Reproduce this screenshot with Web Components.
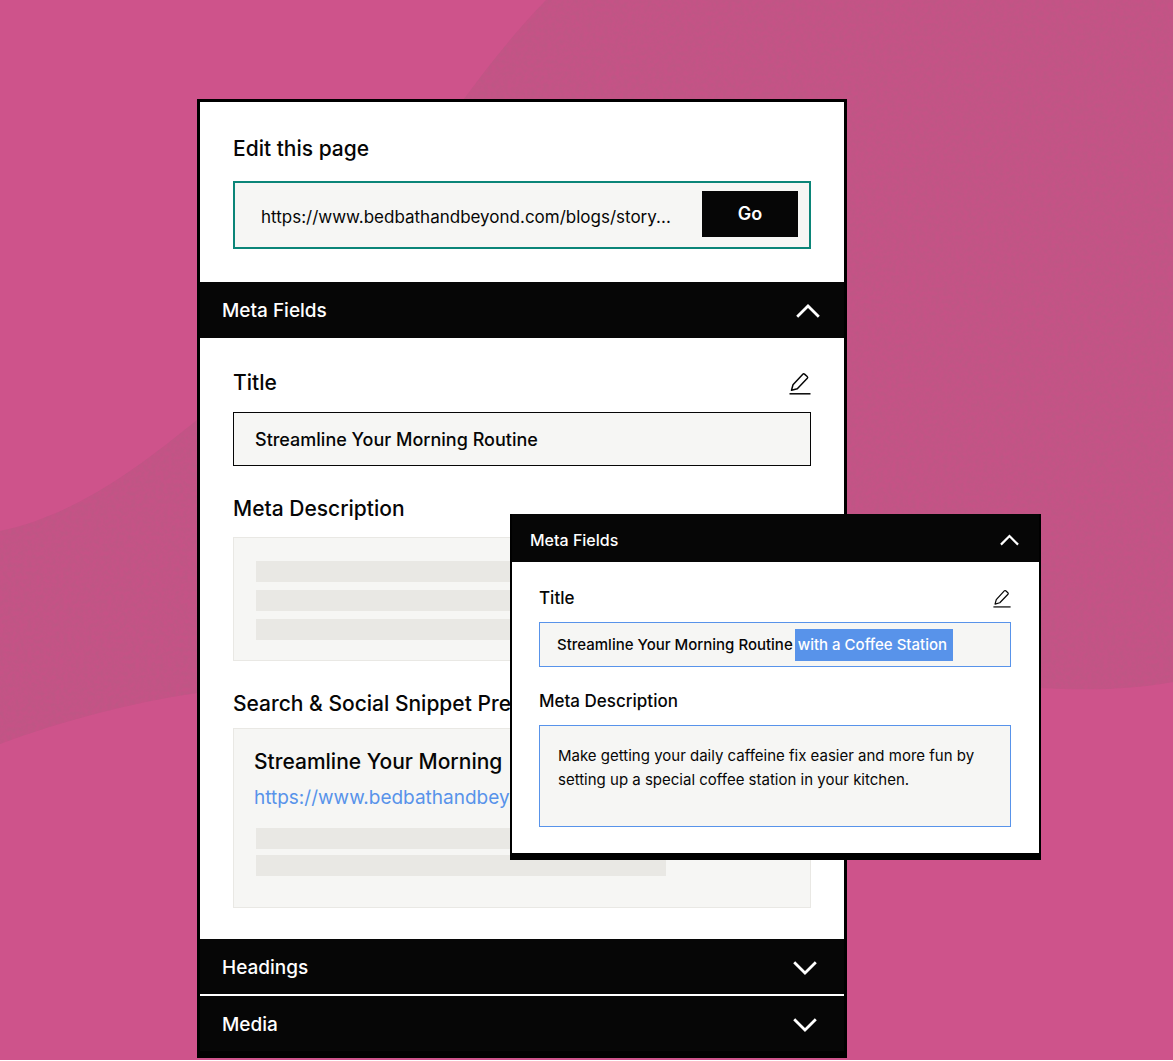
<!DOCTYPE html>
<html lang="en">
<head>
  <meta charset="UTF-8">
  <meta name="viewport" content="width=device-width, initial-scale=1.0">
  <title>Edit this page</title>
  <style>
    body {
      margin: 0;
      background: #ffffff;
      color: #060606;
      font-family: Inter, "Liberation Sans", sans-serif;
    }
  </style>
</head>
<body>
  <editor-stage>
    <editor-panel slot="main">
      <url-form label="Edit this page" value="https://www.bedbathandbeyond.com/blogs/story..." action="Go"></url-form>
      <section-header label="Meta Fields" open></section-header>
      <section-body>
        <text-field label="Title" value="Streamline Your Morning Routine"></text-field>
        <preview-card label="Meta Description" lines="3"></preview-card>
        <preview-card label="Search &amp; Social Snippet Pre" lines="2" class="snippet">
          <snippet-text heading="Streamline Your Morning" url="https://www.bedbathandbeyond.com"></snippet-text>
        </preview-card>
      </section-body>
      <section-header label="Headings"></section-header>
      <section-header label="Media" divided></section-header>
    </editor-panel>
    <editor-panel slot="popup" compact>
      <section-header label="Meta Fields" open compact></section-header>
      <section-body compact>
        <suggestion-field label="Title">Streamline Your Morning Routine<mark slot="added">with a Coffee Station</mark></suggestion-field>
        <description-field label="Meta Description" value="Make getting your daily caffeine fix easier and more fun by setting up a special coffee station in your kitchen."></description-field>
      </section-body>
    </editor-panel>
  </editor-stage>

  <script>
    const pencil = `
      <svg viewBox="0 0 22 23" fill="none" stroke="currentColor" stroke-width="1.5" stroke-linejoin="round" aria-hidden="true">
        <path d="M2.5 18.3 4 12.8 13.8 2.2Q14.6 1.3 15.5 2.1L18.2 4.5Q19.1 5.4 18.3 6.3L8.3 16.7Z"/>
        <path d="M0.5 21.8H21.5"/>
      </svg>
    `;

    class EditorStage extends HTMLElement {
      connectedCallback() {
        this.attachShadow({ mode: 'open' });
        this.shadowRoot.innerHTML = `
          <style>
            :host {
              display: grid;
              position: relative;
              grid-template-columns: 197fr 313fr 337fr 194fr 132fr;
              align-items: start;
              padding: 99px 0 2px;
              background: #ce538b;
            }
            .backdrop {
              position: absolute;
              inset: 0;
              width: 100%;
              height: 100%;
            }
            .main {
              grid-area: 1 / 2 / 2 / 4;
              position: relative;
            }
            .popup {
              grid-area: 1 / 3 / 2 / 5;
              position: relative;
              margin-top: 415px;
            }
          </style>
          <svg class="backdrop" viewBox="0 0 1173 1060" preserveAspectRatio="none" aria-hidden="true">
            <defs>
              <filter id="grain" x="0" y="0" width="100%" height="100%" color-interpolation-filters="sRGB">
                <feTurbulence type="fractalNoise" baseFrequency="0.25" numOctaves="2" seed="4"/>
                <feColorMatrix values="0 0 0 0 0.66  0 0 0 0 0.38  0 0 0 0 0.51  0.5 0 0 0 -0.12"/>
              </filter>
              <clipPath id="wave">
                <path d="M546 0C515 32 488 66 461 103C380 215 300 340 197 420C135 470 75 515 0 531V744C65 720 130 703 197 693C450 665 800 690 1041 688C1090 691 1135 689 1173 682V0Z"/>
              </clipPath>
            </defs>
            <g clip-path="url(#wave)">
              <rect width="1173" height="1060" fill="#c65286"/>
              <rect width="1173" height="1060" filter="url(#grain)"/>
            </g>
          </svg>
          <div class="main"><slot name="main"></slot></div>
          <div class="popup"><slot name="popup"></slot></div>
        `;
      }
    }

    class EditorPanel extends HTMLElement {
      connectedCallback() {
        this.attachShadow({ mode: 'open' });
        this.shadowRoot.innerHTML = `
          <style>
            :host {
              display: block;
              border: 3px solid #000000;
              border-bottom-width: 7px;
              background: #ffffff;
            }
            :host([compact]) {
              border-width: 0 2px 7px;
            }
          </style>
          <slot></slot>
        `;
      }
    }

    class UrlForm extends HTMLElement {
      connectedCallback() {
        this.attachShadow({ mode: 'open' });
        this.shadowRoot.innerHTML = `
          <style>
            :host {
              display: block;
              padding: 33px;
            }
            label {
              display: block;
              font-size: 21px;
              font-weight: 500;
              line-height: 28px;
              margin-bottom: 18px;
            }
            .box {
              display: flex;
              align-items: center;
              padding: 8px 11px 10px 0;
              border: 2px solid #0b8578;
              background: #f6f6f4;
            }
            input {
              flex: 1;
              min-width: 0;
              height: 46px;
              padding: 6px 0 0 26px;
              box-sizing: border-box;
              border: 0;
              outline: 0;
              background: none;
              color: inherit;
              font: 400 17px/24px Inter, "Liberation Sans", sans-serif;
            }
            button {
              width: 96px;
              height: 46px;
              border: 0;
              background: #060606;
              color: #ffffff;
              font: 600 18px/24px Inter, "Liberation Sans", sans-serif;
            }
          </style>
          <label for="url">${this.getAttribute('label')}</label>
          <div class="box">
            <input id="url" type="text" value="${this.getAttribute('value')}">
            <button type="button">${this.getAttribute('action')}</button>
          </div>
        `;
      }
    }

    class SectionHeader extends HTMLElement {
      connectedCallback() {
        const open = this.hasAttribute('open');
        this.attachShadow({ mode: 'open' });
        this.shadowRoot.innerHTML = `
          <style>
            :host {
              display: block;
              background: #060606;
            }
            :host([divided]) {
              border-top: 2px solid #ffffff;
            }
            button {
              display: flex;
              align-items: center;
              justify-content: space-between;
              width: 100%;
              height: 55px;
              padding: 2px 27px 0 22px;
              border: 0;
              background: none;
              color: #ffffff;
              font: 500 19px/28px Inter, "Liberation Sans", sans-serif;
            }
            svg {
              width: 24px;
              height: 14px;
            }
            :host([open]) button {
              height: 56px;
              padding-right: 24px;
            }
            :host([compact]) button {
              height: 48px;
              padding: 4px 20px 0 18px;
              font-size: 16px;
            }
            :host([compact]) svg {
              width: 19px;
              height: 12px;
            }
          </style>
          <button type="button" aria-expanded="${open}">
            <span>${this.getAttribute('label')}</span>
            <svg viewBox="0 0 24 14" fill="none" stroke="currentColor" stroke-width="2.8" aria-hidden="true">
              <path d="${open ? 'M1.2 12.8 12 2 22.8 12.8' : 'M1.2 1.2 12 12 22.8 1.2'}"/>
            </svg>
          </button>
        `;
      }
    }

    class SectionBody extends HTMLElement {
      connectedCallback() {
        this.attachShadow({ mode: 'open' });
        this.shadowRoot.innerHTML = `
          <style>
            :host {
              display: flex;
              flex-direction: column;
              gap: 29px;
              padding: 31px 33px;
            }
            :host([compact]) {
              gap: 22px;
              padding: 24px 28px 26px 27px;
            }
          </style>
          <slot></slot>
        `;
      }
    }

    class TextField extends HTMLElement {
      connectedCallback() {
        this.attachShadow({ mode: 'open' });
        this.shadowRoot.innerHTML = `
          <style>
            :host {
              display: block;
            }
            .top {
              display: flex;
              align-items: center;
              justify-content: space-between;
              margin-bottom: 15px;
            }
            label {
              font-size: 21px;
              font-weight: 500;
              line-height: 28px;
            }
            button {
              display: flex;
              padding: 0;
              border: 0;
              background: none;
              color: inherit;
            }
            svg {
              width: 22px;
              height: 23px;
            }
            input {
              display: block;
              width: 100%;
              height: 54px;
              padding: 0 21px;
              box-sizing: border-box;
              border: 1px solid #060606;
              border-radius: 0;
              outline: 0;
              background: #f6f6f4;
              color: inherit;
              font: 500 18px/24px Inter, "Liberation Sans", sans-serif;
            }
          </style>
          <div class="top">
            <label for="field">${this.getAttribute('label')}</label>
            <button type="button" aria-label="Edit title">${pencil}</button>
          </div>
          <input id="field" type="text" value="${this.getAttribute('value')}">
        `;
      }
    }

    class PreviewCard extends HTMLElement {
      connectedCallback() {
        const bars = '<i></i>'.repeat(Number(this.getAttribute('lines')));
        this.attachShadow({ mode: 'open' });
        this.shadowRoot.innerHTML = `
          <style>
            :host {
              display: block;
            }
            h3 {
              margin: 0 0 14px;
              font-size: 21px;
              font-weight: 500;
              line-height: 28px;
              white-space: nowrap;
            }
            .card {
              padding: 23px 22px 20px;
              border: 1px solid #e9e8e4;
              background: #f6f6f4;
            }
            .bars {
              display: grid;
              gap: 8px;
            }
            i {
              height: 21px;
              background: #e9e8e4;
            }
            :host(.snippet) h3 {
              margin-bottom: 10px;
            }
            :host(.snippet) .card {
              padding: 19px 22px 31px;
            }
            :host(.snippet) .bars {
              gap: 6px;
            }
            :host(.snippet) i:last-child {
              width: 77%;
            }
          </style>
          <h3>${this.getAttribute('label')}</h3>
          <div class="card">
            <slot></slot>
            <div class="bars">${bars}</div>
          </div>
        `;
      }
    }

    class SnippetText extends HTMLElement {
      connectedCallback() {
        this.attachShadow({ mode: 'open' });
        this.shadowRoot.innerHTML = `
          <style>
            :host {
              display: block;
              margin: 0 0 16px -2px;
              white-space: nowrap;
            }
            h4 {
              margin: 0 0 8px;
              font-size: 21px;
              font-weight: 500;
              line-height: 28px;
            }
            a {
              display: block;
              color: #5893ea;
              font-size: 19px;
              line-height: 28px;
              text-decoration: none;
            }
          </style>
          <h4>${this.getAttribute('heading')}</h4>
          <a href="#">${this.getAttribute('url')}</a>
        `;
      }
    }

    class SuggestionField extends HTMLElement {
      connectedCallback() {
        this.attachShadow({ mode: 'open' });
        this.shadowRoot.innerHTML = `
          <style>
            :host {
              display: block;
            }
            .top {
              display: flex;
              align-items: center;
              justify-content: space-between;
              margin-bottom: 12px;
            }
            .name {
              font-size: 17px;
              font-weight: 500;
              line-height: 24px;
            }
            button {
              display: flex;
              padding: 0;
              border: 0;
              background: none;
              color: inherit;
            }
            svg {
              width: 18px;
              height: 19px;
            }
            .box {
              display: flex;
              align-items: center;
              gap: 2px;
              height: 43px;
              padding-left: 17px;
              border: 1px solid #5893ea;
              outline: 0;
              background: #f6f6f4;
              font-size: 15px;
              font-weight: 500;
              line-height: 32px;
              white-space: nowrap;
            }
            ::slotted(mark) {
              padding: 0 6px 0 3px;
              background: #5893ea;
              color: #ffffff;
            }
          </style>
          <div class="top">
            <span class="name" id="name">${this.getAttribute('label')}</span>
            <button type="button" aria-label="Edit title">${pencil}</button>
          </div>
          <div class="box" role="textbox" contenteditable="true" spellcheck="false" aria-labelledby="name"><slot></slot><slot name="added"></slot></div>
        `;
      }
    }

    class DescriptionField extends HTMLElement {
      connectedCallback() {
        this.attachShadow({ mode: 'open' });
        this.shadowRoot.innerHTML = `
          <style>
            :host {
              display: block;
            }
            label {
              display: block;
              margin-bottom: 12px;
              font-size: 17px;
              font-weight: 500;
              line-height: 24px;
            }
            textarea {
              display: block;
              width: 100%;
              height: 102px;
              padding: 18px 18px 0;
              box-sizing: border-box;
              border: 1px solid #5893ea;
              border-radius: 0;
              outline: 0;
              resize: none;
              background: #f6f6f4;
              color: inherit;
              font: 400 15px/24px Inter, "Liberation Sans", sans-serif;
            }
          </style>
          <label for="text">${this.getAttribute('label')}</label>
          <textarea id="text" spellcheck="false">${this.getAttribute('value')}</textarea>
        `;
      }
    }

    customElements.define('editor-stage', EditorStage);
    customElements.define('editor-panel', EditorPanel);
    customElements.define('url-form', UrlForm);
    customElements.define('section-header', SectionHeader);
    customElements.define('section-body', SectionBody);
    customElements.define('text-field', TextField);
    customElements.define('preview-card', PreviewCard);
    customElements.define('snippet-text', SnippetText);
    customElements.define('suggestion-field', SuggestionField);
    customElements.define('description-field', DescriptionField);
  </script>
</body>
</html>
